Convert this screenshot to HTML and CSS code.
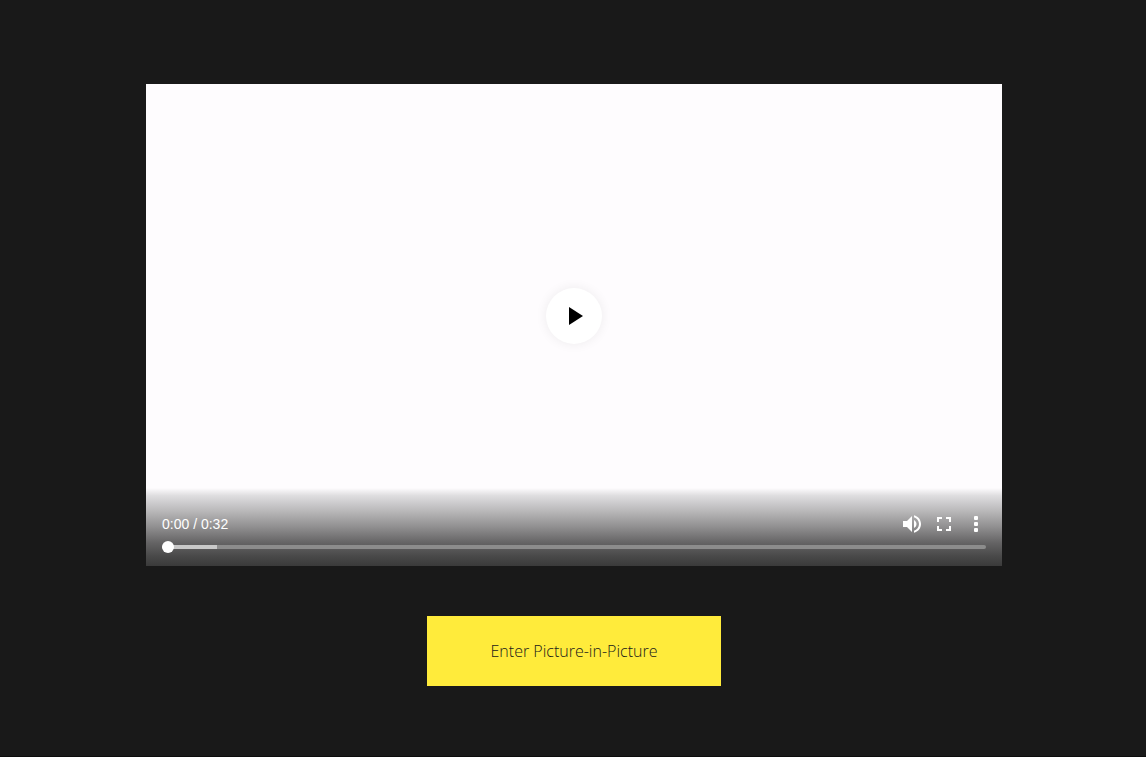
FILE: index.html
```html
<!DOCTYPE html>
<html lang="en">
<head>
<meta charset="utf-8">
<meta name="viewport" content="width=device-width, initial-scale=1">
<title>Picture-in-Picture</title>
<link rel="stylesheet" href="styles.css">
</head>
<body>
<main class="page">
  <section class="player" aria-label="Video player">
    <div class="stage">
      <button class="play" type="button" aria-label="Play">
        <svg class="play-icon" viewBox="0 0 32 32" aria-hidden="true"><path d="M11 7v18l14-9z"/></svg>
      </button>
    </div>
    <div class="controls">
      <div class="row">
        <span class="time">0:00 / 0:32</span>
        <div class="actions">
          <button class="action" type="button" aria-label="Mute">
            <svg class="icon" viewBox="0 0 24 24" aria-hidden="true"><path d="M3 9v6h4l5 5V4L7 9H3zm13.5 3c0-1.77-1.02-3.29-2.5-4.03v8.05c1.48-.73 2.5-2.25 2.5-4.02zM14 3.23v2.06c2.89.86 5 3.54 5 6.71s-2.11 5.85-5 6.71v2.06c4.01-.91 7-4.49 7-8.77s-2.99-7.86-7-8.77z"/></svg>
          </button>
          <button class="action" type="button" aria-label="Full screen">
            <svg class="icon" viewBox="0 0 24 24" aria-hidden="true"><path d="M7 14H5v5h5v-2H7v-3zm-2-4h2V7h3V5H5v5zm12 7h-3v2h5v-5h-2v3zM14 5v2h3v3h2V5h-5z"/></svg>
          </button>
          <button class="action" type="button" aria-label="More options">
            <svg class="icon" viewBox="0 0 24 24" aria-hidden="true"><rect x="10" y="4" width="4" height="4" rx="1"/><rect x="10" y="10" width="4" height="4" rx="1"/><rect x="10" y="16" width="4" height="4" rx="1"/></svg>
          </button>
        </div>
      </div>
      <input class="seek" type="range" min="0" max="32" value="0" aria-label="Seek">
    </div>
  </section>
  <button class="pip" type="button">Enter Picture-in-Picture</button>
</main>
</body>
</html>
```
FILE: styles.css
```css
* {
  box-sizing: border-box;
}

body {
  margin: 0;
  background: #191919;
  font-family: "Open Sans", sans-serif;
}

button {
  border: 0;
  padding: 0;
  cursor: pointer;
}

.page {
  display: flex;
  flex-direction: column;
  align-items: center;
  gap: 50px;
  min-height: 100vh;
  padding: 84px 16px 70px 18px;
  border-bottom: 1px solid #0c0c0c;
}

.player {
  display: flex;
  flex-direction: column;
  width: 100%;
  max-width: 856px;
  aspect-ratio: 16 / 9;
  background: #fefcfe;
}

.stage {
  display: flex;
  flex: 1;
  align-items: flex-end;
  justify-content: center;
  padding-bottom: 144px;
}

.play {
  display: flex;
  align-items: center;
  justify-content: center;
  width: 56px;
  height: 56px;
  border-radius: 50%;
  background: #fff;
  box-shadow: 0 0 12px rgba(0, 0, 0, 0.07);
}

.play-icon {
  width: 32px;
  height: 32px;
  fill: #000;
}

.controls {
  display: flex;
  flex-direction: column;
  gap: 5px;
  padding: 24px 16px 13px;
  background: linear-gradient(#fefcfe 0%, #dedddf 10%, #b8b7b8 30%, #908f90 50%, #656465 70%, #484848 88%, #3a3a3a 100%);
}

.row {
  display: flex;
  align-items: center;
  justify-content: space-between;
}

.time {
  color: #fff;
  font: 14px/24px "Liberation Sans", Arial, sans-serif;
}

.actions {
  display: flex;
  gap: 8px;
  margin-right: -2px;
}

.action {
  display: flex;
  background: none;
}

.icon {
  width: 24px;
  height: 24px;
  fill: #fff;
}

.seek {
  appearance: none;
  width: 100%;
  height: 12px;
  margin: 0;
  background: none;
  cursor: pointer;
}

.seek::-webkit-slider-runnable-track {
  height: 4px;
  border-radius: 4px;
  background: linear-gradient(to right, #c8c8c8 55px, #8c8c8c 55px);
}

.seek::-webkit-slider-thumb {
  appearance: none;
  width: 12px;
  height: 12px;
  margin-top: -4px;
  border-radius: 50%;
  background: #fff;
}

.pip {
  padding: 24px 64px;
  background: #ffeb3b;
  color: #191919;
  font: 300 16px/22px "Open Sans", sans-serif;
}
```
